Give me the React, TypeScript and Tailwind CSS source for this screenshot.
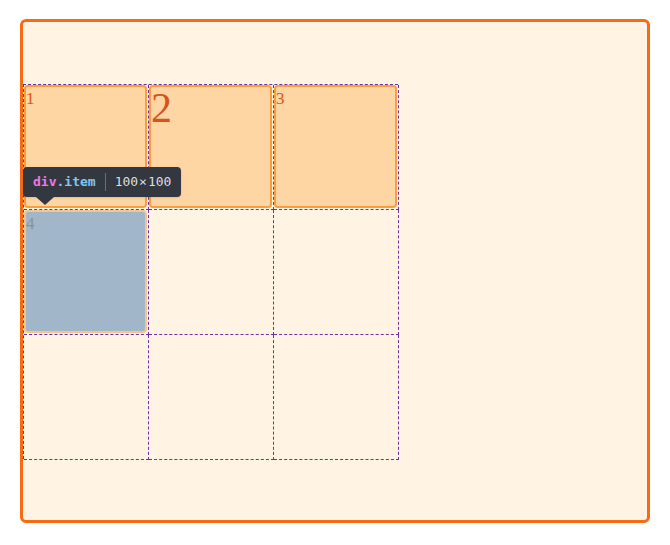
import React from "react";

const items = [
  { label: "1", size: "text-[17px] leading-[24px]", active: false },
  { label: "2", size: "text-[42px] leading-[42px]", active: false },
  { label: "3", size: "text-[17px] leading-[24px]", active: false },
  { label: "4", size: "text-[17px] leading-[24px]", active: true },
];

export default function App() {
  return (
    <div className="min-h-[545px] w-[670px] bg-white pl-5 pt-[19px]">
      <div className="h-[504px] w-[630px] rounded-[6px] border-[3px] border-[#f76b15] bg-[#fff3e4] pt-[62px]">
        <div className="relative w-[375px]">
          <div className="grid grid-cols-[125px_125px_125px] grid-rows-[125px_125px_125px]">
            {items.map((item) => (
              <div
                key={item.label}
                className={
                  item.active
                    ? "m-[1px] flex items-start rounded-[4px] border-2 border-[#f5c68c] bg-[#a1b6c8] font-['Liberation_Serif',serif] text-[#8c9097]"
                    : "m-[1px] flex items-start rounded-[4px] border-2 border-[#f99d3f] bg-[#fed6a4] font-['Liberation_Serif',serif] text-[#d8541c]"
                }
              >
                <span className={item.size}>{item.label}</span>
              </div>
            ))}
          </div>

          {/* grid line overlay */}
          <div className="pointer-events-none absolute inset-0 grid grid-cols-[125px_125px_125px] grid-rows-[125px_125px_125px] border-l border-t border-dashed border-[#6f2fa3]">
            {Array.from({ length: 9 }).map((_, i) => (
              <div
                key={i}
                className="border-b border-r border-dashed border-[#6f2fa3]"
              />
            ))}
          </div>

          {/* inspector tooltip */}
          <div className="absolute left-0 top-[83px] flex h-[30px] items-center rounded-[4px] bg-[#33373f] px-[10px] font-['DejaVu_Sans_Mono',monospace] text-[13px] shadow">
            <span className="font-bold text-[#ee78e6]">div</span>
            <span className="font-bold text-[#82c5f0]">.item</span>
            <span className="mx-[9px] h-[18px] w-px bg-[#6b6f76]" />
            <span className="text-[#dcdee2]">100</span>
            <span className="mx-[1px] text-[#dcdee2]">×</span>
            <span className="text-[#dcdee2]">100</span>
            <span className="absolute left-[13px] top-[30px] h-0 w-0 border-x-[9px] border-t-[8px] border-x-transparent border-t-[#33373f]" />
          </div>
        </div>
      </div>
    </div>
  );
}
